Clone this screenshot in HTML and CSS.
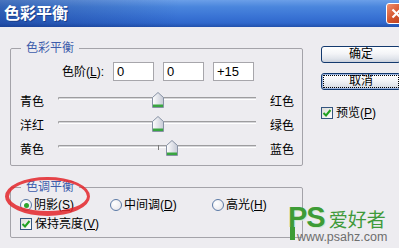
FILE: index.html
```html
<!DOCTYPE html>
<html>
<head>
<meta charset="utf-8">
<title>色彩平衡</title>
<link rel="stylesheet" href="styles.css">
</head>
<body>
<svg class="defs" width="0" height="0">
  <defs>
    <linearGradient id="thumbFill" x1="0" y1="0" x2="1" y2="0">
      <stop offset="0" stop-color="#ffffff"/>
      <stop offset="1" stop-color="#c6cad6"/>
    </linearGradient>
  </defs>
</svg>
<div class="window">
  <div class="titlebar">
    <span class="title">色彩平衡</span>
    <span class="close">
      <svg width="11" height="11" viewBox="0 0 11 11"><path d="M1.5 1.5 L9.5 9.5 M9.5 1.5 L1.5 9.5" stroke="#fff" stroke-width="2.2"/></svg>
    </span>
  </div>

  <div class="client">
    <div class="groups">
      <fieldset class="group balance">
        <legend>色彩平衡</legend>
        <div class="levels">
          <label>色阶(<u>L</u>):</label>
          <input type="text" value="0">
          <input type="text" value="0">
          <input type="text" value="+15">
        </div>
        <div class="slider">
          <span class="name">青色</span>
          <div class="track"><span class="tick"></span><span class="thumb" style="left:50%"><svg width="12" height="16" viewBox="0 0 12 16"><path d="M6 0.5 L11.5 5.5 V15.5 H0.5 V5.5 Z" fill="url(#thumbFill)" stroke="#8792a4"/><rect x="1" y="12.5" width="10" height="2.5" fill="#38a540"/></svg></span></div>
          <span class="name right">红色</span>
        </div>
        <div class="slider">
          <span class="name">洋红</span>
          <div class="track"><span class="tick"></span><span class="thumb" style="left:50%"><svg width="12" height="16" viewBox="0 0 12 16"><path d="M6 0.5 L11.5 5.5 V15.5 H0.5 V5.5 Z" fill="url(#thumbFill)" stroke="#8792a4"/><rect x="1" y="12.5" width="10" height="2.5" fill="#38a540"/></svg></span></div>
          <span class="name right">绿色</span>
        </div>
        <div class="slider">
          <span class="name">黄色</span>
          <div class="track"><span class="tick"></span><span class="thumb" style="left:57.5%"><svg width="12" height="16" viewBox="0 0 12 16"><path d="M6 0.5 L11.5 5.5 V15.5 H0.5 V5.5 Z" fill="url(#thumbFill)" stroke="#8792a4"/><rect x="1" y="12.5" width="10" height="2.5" fill="#38a540"/></svg></span></div>
          <span class="name right">蓝色</span>
        </div>
      </fieldset>

      <fieldset class="group tone">
        <legend>色调平衡</legend>
        <div class="tones">
          <label class="radio"><i class="dot on"></i>阴影(<u>S</u>)</label>
          <label class="radio mid"><i class="dot"></i>中间调(<u>D</u>)</label>
          <label class="radio"><i class="dot"></i>高光(<u>H</u>)</label>
        </div>
        <label class="check keep"><span class="box"><svg width="10" height="10" viewBox="0 0 10 10"><path d="M1.5 5 L4 7.5 L8.5 2" fill="none" stroke="#21a121" stroke-width="2"/></svg></span>保持亮度(<u>V</u>)</label>
      </fieldset>
    </div>

    <div class="actions">
      <button class="btn">确定</button>
      <button class="btn focus">取消</button>
      <label class="check preview"><span class="box"><svg width="10" height="10" viewBox="0 0 10 10"><path d="M1.5 5 L4 7.5 L8.5 2" fill="none" stroke="#21a121" stroke-width="2"/></svg></span>预览(<u>P</u>)</label>
    </div>
  </div>

  <div class="ring"></div>

  <div class="watermark">
    <div class="logo">
      <span class="ps-p">P</span><span class="ps-s">S</span><span class="cn">爱好者</span>
    </div>
    <div class="url">www.psahz.com</div>
  </div>
</div>
</body>
</html>
```

FILE: styles.css
```css
body{
	margin:0;
	background:#edecf0;
	font-family:"Liberation Sans","Noto Sans CJK SC",sans-serif;
	font-size:12px;
	line-height:16px;
	color:#000;
	overflow:hidden;
}

.defs{
	position:absolute;
}

.window{
	position:relative;
	width:399px;
	height:248px;
	overflow:hidden;
	background:#edecf0;
}

.titlebar{
	height:27px;
	display:flex;
	align-items:center;
	justify-content:space-between;
	padding-left:4px;
	background:
		linear-gradient(to right, rgba(10,35,110,0.35), rgba(10,35,110,0) 45%),
		linear-gradient(#6b9fe8 0%, #4a86dd 25%, #3a74d5 60%, #3068cc 85%, #2251ad 100%);
}

.title{
	color:#fff;
	font-size:16px;
	font-weight:bold;
	line-height:20px;
	text-shadow:1px 1px 0 #1c3f8c;
}

.close{
	width:21px;
	height:21px;
	margin-right:-8px;
	box-sizing:border-box;
	border:1px solid #fff;
	border-radius:3px;
	background:linear-gradient(135deg,#f09070,#d4542c 50%,#b83a18);
	display:flex;
	align-items:center;
	justify-content:center;
}

.client{
	display:flex;
	padding:13px 0 0 10px;
}

.groups{
	width:294px;
	display:flex;
	flex-direction:column;
}

.group{
	margin:0;
	min-width:0;
	box-sizing:border-box;
	border:1px solid #a4a3a9;
	border-radius:2px;
	padding:6px 0 5px 9px;
}

.group legend{
	padding:0 5px;
	margin-left:1px;
	color:#3d5cab;
	line-height:16px;
}

.tone{
	margin-top:13px;
	padding:1px 0 4px 9px;
}

.levels{
	display:flex;
	align-items:center;
	height:19px;
	margin-bottom:7px;
}

.levels label{
	width:84px;
	padding-right:9px;
	text-align:right;
}

.levels input{
	width:41px;
	height:19px;
	box-sizing:border-box;
	margin:0 9px 0 0;
	padding:0 0 0 3px;
	border:1px solid #a7a6ab;
	background:#fff;
	font:13px "Liberation Sans",sans-serif;
	color:#000;
	outline:none;
}

.slider{
	display:flex;
	align-items:center;
	height:24px;
}

.slider .name{
	width:38px;
	padding-top:3px;
}

.slider .name.right{
	width:auto;
	margin-left:14px;
}

.track{
	position:relative;
	width:198px;
	height:3px;
	box-sizing:border-box;
	margin-bottom:4px;
	border-top:1px solid #9d9d9f;
	border-left:1px solid #9d9d9f;
	border-bottom:1px solid #fff;
	border-radius:2px 0 0 2px;
	background:#d6d6da;
}

.tick{
	position:absolute;
	left:50%;
	top:-1px;
	width:1px;
	height:5px;
	background:#7a7a7a;
}

.thumb{
	position:absolute;
	top:-6px;
	width:12px;
	height:16px;
	transform:translateX(-50%);
}

.thumb svg{
	display:block;
}

.tones{
	display:flex;
	align-items:center;
	height:18px;
}

.radio{
	display:flex;
	align-items:center;
	width:90px;
}

.radio.mid{
	width:102px;
}

.dot{
	width:12px;
	height:12px;
	box-sizing:border-box;
	margin-right:2px;
	border:1px solid #5b7aa6;
	border-radius:50%;
	background:radial-gradient(circle at 35% 35%, #fff, #e4e3e8);
	display:flex;
	align-items:center;
	justify-content:center;
}

.dot.on::after{
	content:"";
	width:5px;
	height:5px;
	border-radius:50%;
	background:#2ea52e;
}

.check{
	display:flex;
	align-items:center;
	height:19px;
}

.box{
	width:12px;
	height:12px;
	box-sizing:border-box;
	margin-right:3px;
	border:1px solid #34557f;
	background:linear-gradient(135deg,#dcdcd8,#fff);
	display:flex;
	align-items:center;
	justify-content:center;
}

.box svg{
	display:block;
}

.actions{
	margin-left:18px;
	display:flex;
	flex-direction:column;
	align-items:flex-start;
}

.btn{
	width:80px;
	height:17px;
	margin:6px 0 0 0;
	padding:0;
	box-sizing:border-box;
	border:1px solid #13396e;
	border-radius:3px;
	background:linear-gradient(#ffffff 0%, #f3f4f7 45%, #dfe3ea 80%, #c9cfdb 100%);
	font-family:"Liberation Sans","Noto Sans CJK SC",sans-serif;
	font-size:12px;
	line-height:15px;
	color:#000;
	text-align:center;
}

.btn.focus{
	margin-top:10px;
	box-shadow:inset 0 0 0 1px #9cb5e0;
	outline:1px dotted #000;
	outline-offset:-3px;
}

.preview{
	margin-top:15px;
	height:16px;
}

.ring{
	position:absolute;
	left:5px;
	top:177px;
	width:85px;
	height:39px;
	box-sizing:border-box;
	border-style:solid;
	border-color:#e4262b;
	border-width:3px 3px 5px 4px;
	border-radius:50%;
	opacity:0.85;
	filter:blur(0.5px);
}

.watermark{
	position:absolute;
	left:288px;
	top:204px;
}

.logo{
	display:flex;
	align-items:flex-start;
	height:27px;
}

.ps-p,
.ps-s{
	display:inline-block;
	font:bold 29px/27px "Liberation Sans",sans-serif;
	color:#3e9c36;
	text-shadow:1px 1px 0 #d6e8d2;
}

.ps-p{
	position:relative;
	margin-right:-1px;
}

/* the logo's P has a long stem reaching under the url */
.ps-p::after{
	content:"";
	position:absolute;
	left:2px;
	top:23px;
	width:5px;
	height:13px;
	background:#3e9c36;
}

.cn{
	margin:5px 0 0 3px;
	font-family:"Noto Sans CJK SC",sans-serif;
	font-size:19px;
	line-height:19px;
	color:#3f9a3a;
}

.url{
	margin:1px 0 0 9px;
	font-size:12.5px;
	line-height:11px;
	color:#6e6e6e;
}
```
